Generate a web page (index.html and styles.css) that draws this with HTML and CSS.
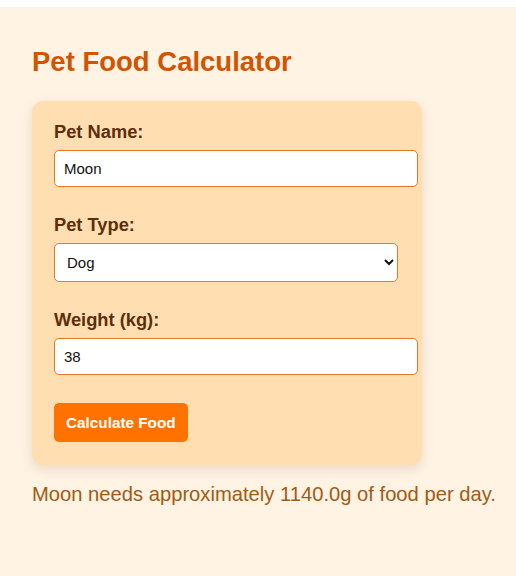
FILE: index.html
```html
<!DOCTYPE html>
<html lang="en">
<head>
<meta charset="utf-8">
<title>Pet Food Calculator</title>
<link rel="stylesheet" href="styles.css">
</head>
<body>
<div class="page">
  <h1 class="title">Pet Food Calculator</h1>
  <div class="card">
    <div class="field">
      <label class="label" for="name">Pet Name:</label>
      <input class="input" id="name" type="text" value="Moon">
    </div>
    <div class="field">
      <label class="label" for="type">Pet Type:</label>
      <select class="select" id="type">
        <option selected>Dog</option>
        <option>Cat</option>
      </select>
    </div>
    <div class="field">
      <label class="label" for="weight">Weight (kg):</label>
      <input class="input" id="weight" type="number" value="38">
    </div>
    <button class="btn" type="button">Calculate Food</button>
  </div>
  <p class="result">Moon needs approximately 1140.0g of food per day.</p>
</div>
</body>
</html>
```
FILE: styles.css
```css
html, body {
  margin: 0;
  padding: 0;
  background: #ffffff;
}
body {
  font-family: "Liberation Sans", Arial, sans-serif;
}
.page {
  margin-top: 7px;
  background: #fff3e4;
  padding: 39px 32px 0;
  min-height: calc(100vh - 46px);
}
.title {
  margin: 0 0 23px;
  font-size: 27.5px;
  font-weight: bold;
  color: #d35400;
}
.card {
  width: 344px;
  padding: 21px 24px 23px 22px;
  background: #ffdfb1;
  border-radius: 11px;
  box-shadow: 0 4px 12px rgba(120, 70, 20, 0.15);
}
.field {
  margin-bottom: 28px;
}
.label {
  display: block;
  font-size: 18.3px;
  line-height: 20px;
  font-weight: bold;
  color: #5c2e0b;
  margin-bottom: 8px;
}
.input {
  display: block;
  width: 100%;
  padding: 9px;
  border: 1px solid #e8772a;
  border-radius: 5px;
  background: #fff;
  font-family: "Liberation Sans", Arial, sans-serif;
  font-size: 15px;
  color: #111;
  outline: none;
}
.input::-webkit-outer-spin-button,
.input::-webkit-inner-spin-button {
  -webkit-appearance: none;
  margin: 0;
}
.select {
  display: block;
  width: 100%;
  box-sizing: border-box;
  padding: 9px 10px 9px 8px;
  border: 1px solid #e8772a;
  border-radius: 5px;
  background: #fff;
  font-family: "Liberation Sans", Arial, sans-serif;
  font-size: 15px;
  color: #111;
}
.btn {
  display: block;
  margin-top: 0;
  padding: 11px 12px;
  border: none;
  border-radius: 5px;
  background: #ff7200;
  color: #fff;
  font-family: "Liberation Sans", Arial, sans-serif;
  font-size: 15.3px;
  font-weight: bold;
  line-height: 17px;
}
.result {
  margin: 18px 0 0;
  font-size: 20.2px;
  line-height: 23px;
  white-space: nowrap;
  color: #a35a12;
}
```
